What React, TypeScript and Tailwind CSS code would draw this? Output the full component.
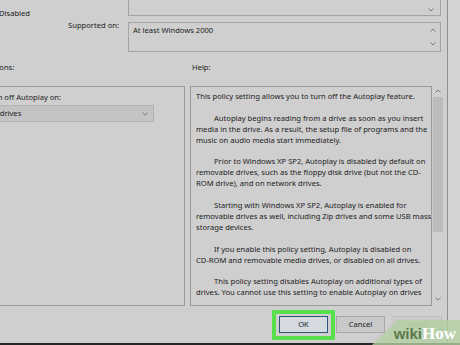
import React from "react";

const Up = () => (
  <svg width="6" height="4" viewBox="0 0 6 4" className="block">
    <polyline points="0.5,3.5 3,1 5.5,3.5" fill="none" stroke="#7a7a7a" strokeWidth="1" />
  </svg>
);
const Down = () => (
  <svg width="6" height="4" viewBox="0 0 6 4" className="block">
    <polyline points="0.5,0.5 3,3 5.5,0.5" fill="none" stroke="#7a7a7a" strokeWidth="1" />
  </svg>
);

export default function App() {
  return (
    <div className="w-[460px] h-[345px] overflow-hidden relative bg-[#cfcfcf] text-[#222] font-['Noto_Sans',sans-serif] text-[7.6px] leading-[11px] flex flex-col">
      <div className="h-[343px] flex">
        {/* main column */}
        <div className="w-[447px] shrink-0 flex flex-col">
          {/* top section */}
          <div className="h-[56px] flex">
            <div className="w-[128px] shrink-0 flex flex-col">
              <div className="mt-[8px] h-[11px] -ml-[1px] whitespace-nowrap">Disabled</div>
              <div className="mt-[1px] h-[11px] text-right pr-[9px] whitespace-nowrap">Supported on:</div>
            </div>
            <div className="w-[313px] flex flex-col">
              <div className="-mt-[1px] h-[17px] border border-[#a3a3a3] flex justify-end items-end pr-[6px] pb-[3px]">
                <Down />
              </div>
              <div className="mt-[6px] h-[30px] border border-[#a3a3a3] flex">
                <div className="flex-1 pl-[4px] pt-[2px] whitespace-nowrap">At least Windows 2000</div>
                <div className="w-[12px] flex flex-col items-center justify-between pt-[5px] pb-[5px] pr-[2px]">
                  <Up />
                  <Down />
                </div>
              </div>
            </div>
          </div>

          {/* labels */}
          <div className="mt-[6px] h-[11px] flex">
            <div className="w-[190px] shrink-0 whitespace-nowrap">
              <span className="-ml-[16px] inline-block">Options:</span>
            </div>
            <div className="pl-[2px]">Help:</div>
          </div>

          {/* panels */}
          <div className="mt-[13px] h-[220px] flex">
            <div className="-ml-[21px] w-[206px] shrink-0 border border-[#9a9a9a] pl-[5px] pt-[5px] flex flex-col">
              <div className="pl-[1px] whitespace-nowrap">Turn off Autoplay on:</div>
              <div className="mt-[2px] w-[169px] h-[17px] bg-[#c3c3c3] border border-[#b3b3b3] flex items-center justify-between pl-[3px] pr-[5px]">
                <span className="whitespace-nowrap">All drives</span>
                <Down />
              </div>
            </div>
            <div className="ml-[5px] flex-1 flex">
              <div className="w-[242px] shrink-0 border border-[#9a9a9a] pl-[5px] pt-[4px] overflow-hidden leading-[10.9px] whitespace-nowrap">
                <p className="mb-[10.9px]">This policy setting allows you to turn off the Autoplay feature.</p>
                <p className="mb-[10.9px] indent-[18px]">
                  Autoplay begins reading from a drive as soon as you insert<br />
                  media in the drive. As a result, the setup file of programs and the<br />
                  music on audio media start immediately.
                </p>
                <p className="mb-[10.9px] indent-[18px]">
                  Prior to Windows XP SP2, Autoplay is disabled by default on<br />
                  removable drives, such as the floppy disk drive (but not the CD-<br />
                  ROM drive), and on network drives.
                </p>
                <p className="mb-[10.9px] indent-[18px]">
                  Starting with Windows XP SP2, Autoplay is enabled for<br />
                  removable drives as well, including Zip drives and some USB mass<br />
                  storage devices.
                </p>
                <p className="mb-[10.9px] indent-[18px]">
                  If you enable this policy setting, Autoplay is disabled on<br />
                  CD-ROM and removable media drives, or disabled on all drives.
                </p>
                <p className="indent-[18px]">
                  This policy setting disables Autoplay on additional types of<br />
                  drives. You cannot use this setting to enable Autoplay on drives
                </p>
              </div>
              <div className="w-[12px] flex flex-col items-center pt-[3px] pb-[5px]">
                <Up />
                <div className="mt-[4px] w-[10px] h-[135px] bg-[#bcbcbc]" />
                <div className="flex-1" />
                <Down />
              </div>
            </div>
          </div>

          {/* buttons */}
          <div className="mt-[10px] flex justify-end pr-[5px] gap-[8px]">
            <div className="relative">
              <div className="absolute -left-[7px] -right-[7px] -top-[6px] -bottom-[7px] border-[4px] border-[#58e04c] rounded-[1px]" />
              <div className="w-[49px] h-[17px] border border-[#2e5478] bg-[#d4dadf] flex items-center justify-center">OK</div>
            </div>
            <div className="w-[49px] h-[17px] border border-[#a8a8a8] bg-[#c9c9c9] flex items-center justify-center">Cancel</div>
            <div className="w-[49px] h-[17px] border border-[#bdbdbd] bg-[#cbcbcb] text-[#9d9d9d] flex items-center justify-center">Apply</div>
          </div>
        </div>
        {/* right strip */}
        <div className="flex-1 border-l border-[#8f8f8f] bg-[#d4d4d4]" />
      </div>
      <div className="h-[2px] bg-[#262626]" />

      {/* wikiHow watermark */}
      <div className="absolute right-0 bottom-0 w-[88px] h-[25px] bg-[#b3d0a3]/80 [clip-path:polygon(29%_0,100%_0,100%_100%,0_100%)]" />
      <div className="absolute right-[4px] bottom-[3px] flex items-baseline leading-[16px]">
        <span className="font-['Liberation_Sans',sans-serif] font-bold text-[15px] text-[#5b7a4c]">wiki</span>
        <span className="font-['Liberation_Serif',serif] font-bold text-[17px] text-white">How</span>
      </div>
    </div>
  );
}
